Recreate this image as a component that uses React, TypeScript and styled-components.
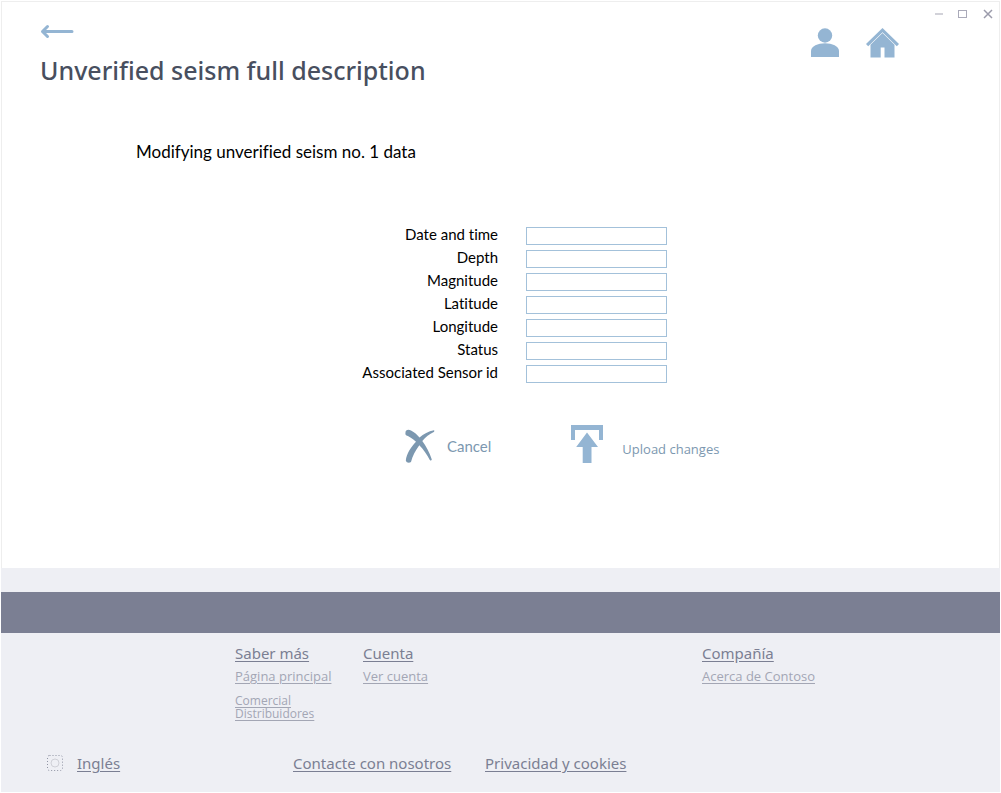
import React from "react";
import styled, { createGlobalStyle } from "styled-components";

const colors = {
  accent: "#94b5d3",
  accentDark: "#7c98b0",
  title: "#484f5f",
  slate: "#7b7f93",
  muted: "#a3a6b4",
  footer: "#eeeff4",
  line: "#eeeeee",
};

const sans = '"Noto Sans", "Open Sans", sans-serif';
const sansNarrow = '"Open Sans", "Noto Sans", sans-serif';
const humanist = 'Lato, "Open Sans", sans-serif';

const GlobalStyle = createGlobalStyle`
  *, *::before, *::after { box-sizing: border-box; }
  body {
    margin: 0;
    background: #ffffff;
    font-family: ${sans};
    font-variant-ligatures: none;
  }
`;

const Window = styled.div`
  display: flex;
  flex-direction: column;
  min-height: 100vh;
  padding: 1px;
`;

const Page = styled.main`
  flex: 1;
  border: 1px solid ${colors.line};
  border-bottom: 0;
`;

const Header = styled.header`
  display: flex;
  justify-content: space-between;
`;

const Heading = styled.div`
  padding: 20px 0 0 38px;
`;

const PlainButton = styled.button`
  display: flex;
  align-items: center;
  padding: 0;
  border: 0;
  background: none;
  color: ${colors.accent};
  cursor: pointer;
`;

const Title = styled.h1`
  margin: 10px 0 0;
  font-size: 25px;
  line-height: 36px;
  font-weight: 500;
  color: ${colors.title};
`;

const Tools = styled.div`
  display: flex;
  flex-direction: column;
  align-items: flex-end;
`;

const WindowControls = styled.div`
  display: flex;
  gap: 13px;
  padding: 6px 5px 0 0;
`;

const HeaderNav = styled.nav`
  display: flex;
  align-items: flex-end;
  gap: 27px;
  padding: 8px 100px 0 0;
`;

const NavLink = styled.a`
  display: flex;
  color: ${colors.accent};
`;

const Intro = styled.p`
  margin: 52px 0 0 134px;
  font-family: ${humanist};
  font-size: 17px;
  line-height: 24px;
  color: #000000;
`;

const Form = styled.form`
  margin-top: 58px;
  padding-left: 38px;
`;

const Field = styled.div`
  display: grid;
  grid-template-columns: 458px 141px;
  column-gap: 28px;
  align-items: end;
`;

const Label = styled.label`
  padding-top: 2px;
  font-family: ${humanist};
  font-size: 15px;
  line-height: 21px;
  text-align: right;
  color: #000000;
`;

const Input = styled.input`
  width: 100%;
  height: 18px;
  padding: 0 4px;
  border: 1px solid #a3c1da;
  border-radius: 0;
  background: #ffffff;
  font-family: ${humanist};
  font-size: 13px;
`;

const Actions = styled.div`
  display: flex;
  align-items: flex-end;
  gap: 80px;
  margin: 42px 0 48px 365px;
`;

const CancelButton = styled(PlainButton)`
  gap: 12px;
  font-family: ${humanist};
  font-size: 15px;
  line-height: 28px;
  color: ${colors.accentDark};
`;

const UploadButton = styled(PlainButton)`
  align-items: flex-end;
  gap: 19px;
  font-family: ${sansNarrow};
  font-size: 13px;
  line-height: 28px;
  color: ${colors.accentDark};
`;

const Footer = styled.footer`
  padding-top: 24px;
  background: ${colors.footer};
`;

const Band = styled.div`
  height: 41px;
  background: ${colors.slate};
`;

const Columns = styled.div`
  display: grid;
  grid-template-columns: 128px 339px 1fr;
  min-height: 109px;
  padding: 9px 0 0 234px;
`;

const Column = styled.section`
  display: flex;
  flex-direction: column;
  align-items: flex-start;
  gap: 1px;
`;

const FooterLink = styled.a`
  font-size: 15px;
  line-height: 22px;
  color: ${colors.slate};
  text-underline-offset: 2px;
`;

const SmallLink = styled(FooterLink)`
  font-family: ${sansNarrow};
  font-size: 13px;
  color: ${colors.muted};
`;

const TightLinks = styled.div`
  display: flex;
  flex-direction: column;
  margin-top: 6px;

  ${SmallLink} {
    font-size: 12px;
    line-height: 13px;
  }
`;

const BottomNav = styled.nav`
  display: grid;
  grid-template-columns: 32px 216px 192px 1fr;
  align-items: center;
  padding: 10px 0 18px 44px;
`;

const fields = [
  ["date", "Date and time"],
  ["depth", "Depth"],
  ["magnitude", "Magnitude"],
  ["latitude", "Latitude"],
  ["longitude", "Longitude"],
  ["status", "Status"],
  ["sensor", "Associated Sensor id"],
];

const BackIcon = () => (
  <svg width="34" height="20" viewBox="0 0 34 20" fill="none" stroke="currentColor" strokeWidth="3" strokeLinecap="round" strokeLinejoin="round">
    <path d="M2.5 9.5H32M7.500 4.500L2.500 9.500L7.500 14.500" />
  </svg>
);

const UserIcon = () => (
  <svg width="28" height="30" viewBox="0 0 28 30" fill="currentColor">
    <circle cx="14" cy="7.500" r="7.200" />
    <path d="M0 29V23C0 18 7 15.200 14 15.200S28 18 28 23V29Z" />
  </svg>
);

const HomeIcon = () => (
  <svg width="33" height="30" viewBox="0 0 33 30" fill="currentColor">
    <path d="M16.500 0L33 16L30.800 18.200L16.500 4.200L2.200 18.200L0 16Z" />
    <path d="M16.500 5L28.500 16.800V29.500H18.500V19.500H14.700V29.500H4.500V16.800Z" />
  </svg>
);

const CancelIcon = () => (
  <svg width="30" height="34" viewBox="0 0 30 34" fill="currentColor">
    <path d="M0.500 3.500C0.500 1 3 0 6 1.500C9.500 3.300 12 5.500 14.500 8.600C18.500 5 23.500 2 29 1.200C29.500 1.600 29.400 2.400 28.800 2.900C24.500 5 20.500 7.900 17.300 12C21 17 24.500 23.500 26.800 30.500C26.500 31.700 25.500 32 24.800 31C22 25.500 18.500 20.500 14.300 16.200C10.500 21.500 7.500 26.500 6 33C4 34.300 1.500 33.800 0.800 31.500C1.500 25 6 18 11 12.800C7.500 9.500 4 7.600 1 6.300C0.400 5.500 0.300 4.500 0.500 3.500Z" />
  </svg>
);

const UploadIcon = () => (
  <svg width="32" height="38" viewBox="0 0 32 38" fill={colors.accent}>
    <path d="M0 0H32V15H28V5H4V15H0Z" />
    <path d="M16 7.500L27 22H20.500V38H11.700V22H5.200Z" />
  </svg>
);

const LanguageIcon = () => (
  <svg width="20" height="18" viewBox="0 0 20 18" fill="none">
    <rect x="2.500" y="1.500" width="15" height="15" rx="2" stroke="#8f93a3" strokeDasharray="1 2" />
    <circle cx="10" cy="9" r="4" stroke="#cfd0d7" />
  </svg>
);

export default function App() {
  return (
    <>
      <GlobalStyle />
      <Window>
        <Page>
          <Header>
            <Heading>
              <PlainButton type="button" aria-label="Back"><BackIcon /></PlainButton>
              <Title>Unverified seism full description</Title>
            </Heading>
            <Tools>
              <WindowControls>
                <PlainButton type="button" aria-label="Minimize">
                  <svg width="12" height="12"><path d="M3 6H11" stroke="#c3c3cd" strokeWidth="1.500" /></svg>
                </PlainButton>
                <PlainButton type="button" aria-label="Maximize">
                  <svg width="12" height="12"><rect x="1.500" y="2.500" width="8" height="7" fill="none" stroke="#aaaab9" /></svg>
                </PlainButton>
                <PlainButton type="button" aria-label="Close">
                  <svg width="12" height="12"><path d="M2 2L10 10M10 2L2 10" stroke="#9b9bab" strokeWidth="1.500" /></svg>
                </PlainButton>
              </WindowControls>
              <HeaderNav>
                <NavLink href="#profile" aria-label="Profile"><UserIcon /></NavLink>
                <NavLink href="#home" aria-label="Home"><HomeIcon /></NavLink>
              </HeaderNav>
            </Tools>
          </Header>
          <Intro>Modifying unverified seism no. 1 data</Intro>
          <Form onSubmit={(e) => e.preventDefault()}>
            {fields.map(([id, text]) => (
              <Field key={id}>
                <Label htmlFor={id}>{text}</Label>
                <Input id={id} type="text" />
              </Field>
            ))}
            <Actions>
              <CancelButton type="button"><CancelIcon />Cancel</CancelButton>
              <UploadButton type="submit"><UploadIcon />Upload changes</UploadButton>
            </Actions>
          </Form>
        </Page>
        <Footer>
          <Band />
          <Columns>
            <Column>
              <FooterLink href="#more">Saber más</FooterLink>
              <SmallLink href="#main">Página principal</SmallLink>
              <TightLinks>
                <SmallLink href="#commercial">Comercial</SmallLink>
                <SmallLink href="#distributors">Distribuidores</SmallLink>
              </TightLinks>
            </Column>
            <Column>
              <FooterLink href="#account">Cuenta</FooterLink>
              <SmallLink href="#view-account">Ver cuenta</SmallLink>
            </Column>
            <Column>
              <FooterLink href="#company">Compañía</FooterLink>
              <SmallLink href="#about">Acerca de Contoso</SmallLink>
            </Column>
          </Columns>
          <BottomNav>
            <LanguageIcon />
            <div><FooterLink href="#english">Inglés</FooterLink></div>
            <div><FooterLink href="#contact">Contacte con nosotros</FooterLink></div>
            <div><FooterLink href="#privacy">Privacidad y cookies</FooterLink></div>
          </BottomNav>
        </Footer>
      </Window>
    </>
  );
}
